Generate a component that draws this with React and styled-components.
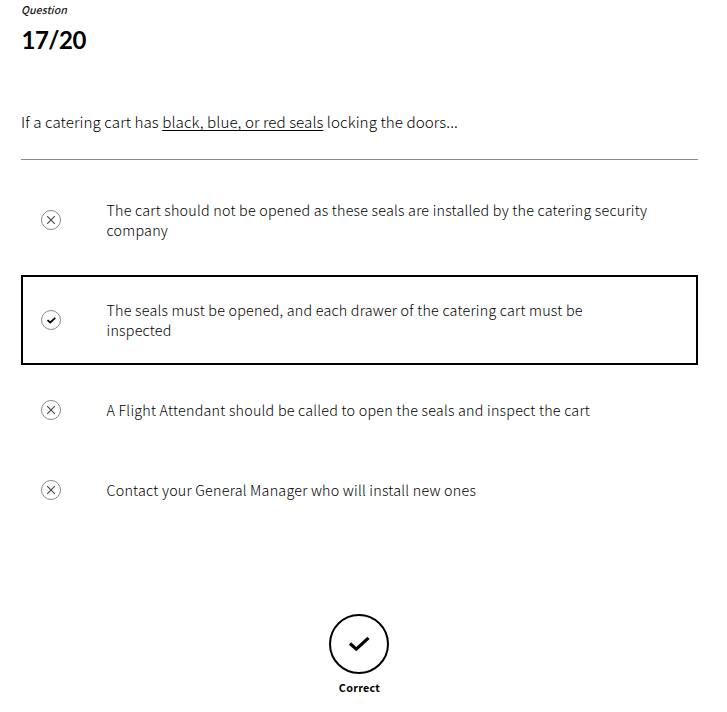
import React from "react";
import styled, { createGlobalStyle } from "styled-components";

const GlobalStyle = createGlobalStyle`
  * { box-sizing: border-box; }
  body {
    margin: 0;
    background: #fff;
    color: #000;
    font-family: "Noto Sans CJK SC", "Noto Sans", sans-serif;
  }
`;

const Page = styled.main`
  width: 727px;
  height: 712px;
  padding: 0 29px 0 21px;
  overflow: hidden;
`;

const Counter = styled.header`
  height: 105px;
  padding-top: 2px;
`;

const CounterLabel = styled.div`
  color: #1a1a1a;
  font-size: 10.6px;
  font-style: italic;
  font-weight: 500;
  line-height: 16px;
`;

const CounterValue = styled.h1`
  margin: 7px 0 0;
  padding-left: 0.5px;
  font: 700 24px/30px Lato, sans-serif;
  letter-spacing: -0.5px;
`;

const Prompt = styled.h2`
  height: 55px;
  margin: 0;
  padding-top: 4px;
  border-bottom: 1px solid #8a8a8a;
  font-size: 15.2px;
  font-weight: 300;
  line-height: 24px;
  letter-spacing: 0.06px;
  white-space: nowrap;
`;

const Term = styled.u`
  text-decoration-thickness: 1px;
  text-underline-offset: 2px;
  text-decoration-skip-ink: none;
`;

const Options = styled.ul`
  display: flex;
  flex-direction: column;
  gap: 10px;
  margin: 15px 0 0;
  padding: 0;
  list-style: none;
`;

const Option = styled.li`
  display: flex;
  align-items: center;
  gap: 45.5px;
  padding: 23px 18px;
  border: 2px solid ${(p) => (p.$selected ? "#000" : "transparent")};
`;

const OptionText = styled.span`
  width: 544px;
  font-size: 14.32px;
  font-weight: 300;
  line-height: 20px;
  letter-spacing: 0.22px;
`;

const MarkIcon = styled.svg`
  flex: none;
  display: block;
  width: 20px;
  height: 20px;
  fill: none;
`;

const Result = styled.footer`
  display: flex;
  flex-direction: column;
  align-items: center;
  width: 676px;
  margin-top: 89px;
`;

const ResultIcon = styled.svg`
  display: block;
  width: 60px;
  height: 60px;
  fill: none;
  stroke: #000;
`;

const ResultLabel = styled.div`
  margin-top: 5px;
  padding-left: 1px;
  font-size: 10.8px;
  font-weight: 700;
  line-height: 16px;
  letter-spacing: 0.25px;
`;

const options = [
  { text: "The cart should not be opened as these seals are installed by the catering security company" },
  { text: "The seals must be opened, and each drawer of the catering cart must be inspected", correct: true },
  { text: "A Flight Attendant should be called to open the seals and inspect the cart" },
  { text: "Contact your General Manager who will install new ones" },
];

function Mark({ correct }) {
  return (
    <MarkIcon viewBox="0 0 20 20">
      <circle cx="10" cy="10" r="9.5" stroke="#888" />
      {correct ? (
        <path d="M6.5 10.1 9.2 12.5 14.3 7.8" stroke="#000" strokeWidth="1.7" />
      ) : (
        <path d="M6.2 6.2 13.8 13.8M13.8 6.2 6.2 13.8" stroke="#444" strokeWidth="1.1" />
      )}
    </MarkIcon>
  );
}

export default function App() {
  return (
    <Page>
      <GlobalStyle />
      <Counter>
        <CounterLabel>Question</CounterLabel>
        <CounterValue>17/20</CounterValue>
      </Counter>
      <Prompt>
        If a catering cart has <Term>black, blue, or red seals</Term> locking the doors...
      </Prompt>
      <Options>
        {options.map((o) => (
          <Option key={o.text} $selected={o.correct}>
            <Mark correct={o.correct} />
            <OptionText>{o.text}</OptionText>
          </Option>
        ))}
      </Options>
      <Result>
        <ResultIcon viewBox="0 0 60 60">
          <circle cx="30" cy="30" r="29" strokeWidth="2" />
          <path d="M21 29.5 27.3 35.2 39.5 23.8" strokeWidth="3.2" />
        </ResultIcon>
        <ResultLabel>Correct</ResultLabel>
      </Result>
    </Page>
  );
}
